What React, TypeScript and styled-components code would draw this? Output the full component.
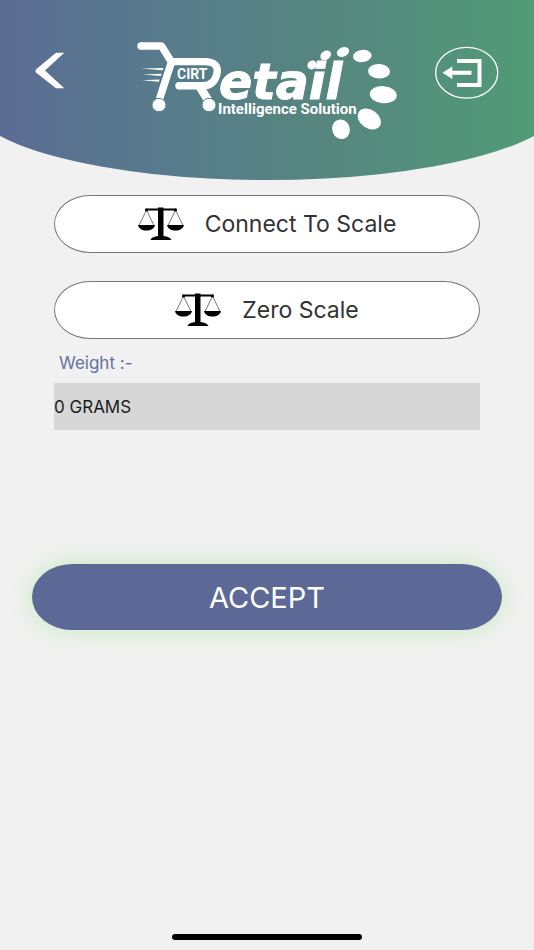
import React from "react";
import styled, { createGlobalStyle } from "styled-components";

const GlobalStyle = createGlobalStyle`
  *, *::before, *::after { box-sizing: border-box; }
  body { margin: 0; background: #f1f1f1; font-family: Inter, "Liberation Sans", sans-serif; }
  button, input { font-family: inherit; }
`;

const Page = styled.div`
  min-height: 100vh;
  display: flex;
  flex-direction: column;
  background: #f1f1f1;
`;

const Header = styled.header`
  position: relative;
  display: flex;
  align-items: flex-start;
  justify-content: space-between;
  padding: 35px 35px 35px;
  overflow: hidden;
  isolation: isolate;

  &::before {
    content: "";
    position: absolute;
    z-index: -1;
    inset: 0 -6%;
    border-radius: 0 0 50% 50% / 0 0 80px 80px;
    background: linear-gradient(90deg, #5c6c94 5%, #577c8b 35%, #56857f 58%, #52957a 85%, #529c74 96%);
  }
`;

const IconButton = styled.button`
  display: block;
  padding: 0;
  border: 0;
  background: none;
  cursor: pointer;

  svg { display: block; }
`;

const Logo = styled.svg`
  display: block;
  fill: #fff;
`;

const Wordmark = styled.text`
  font: italic 700 49px "DejaVu Sans", sans-serif;
  stroke: #fff;
  stroke-width: 1px;
`;

const LogoCaption = styled.text<{ $size: number }>`
  font: 700 ${(p) => p.$size}px Roboto, sans-serif;
`;

const Main = styled.main`
  flex: 1;
  display: flex;
  flex-direction: column;
  padding: 15px 32px 0;
`;

const Controls = styled.section`
  display: flex;
  flex-direction: column;
  padding: 0 22px;
`;

const ScaleButton = styled.button`
  display: flex;
  align-items: center;
  justify-content: center;
  gap: 21px;
  height: 58px;
  margin-bottom: 28px;
  padding: 0;
  border: 1px solid #777;
  border-radius: 36px / 50%;
  background: #fff;
  color: #333;
  font-size: 23px;
  line-height: 28px;
  cursor: pointer;

  & + & { margin-bottom: 14px; }
`;

const WeightLabel = styled.label`
  padding: 0 5px;
  color: #6272a0;
  font-size: 17px;
  line-height: 20px;
`;

const WeightField = styled.input`
  width: 100%;
  height: 47px;
  margin-top: 10px;
  padding: 0;
  border: 0;
  border-radius: 0;
  outline: 0;
  background: #d7d7d7;
  color: #1c1c1c;
  font-size: 17px;
`;

const AcceptButton = styled.button`
  height: 66px;
  margin-top: 134px;
  padding: 0;
  border: 0;
  border-radius: 40px / 50%;
  background: #5c6996;
  box-shadow: 0 0 24px #c4ebbd;
  color: #fff;
  font-size: 29px;
  cursor: pointer;
`;

const HomeIndicator = styled.div`
  align-self: center;
  width: 190px;
  height: 6px;
  margin: 10px 0;
  border-radius: 3px;
  background: #000;
`;

const dots = [
  { x: 312, y: 65, rx: 4.8, ry: 4.2, turn: -35 },
  { x: 325.7, y: 55.3, rx: 5.8, ry: 4.4, turn: -35 },
  { x: 343, y: 52, rx: 6.4, ry: 4.6, turn: -22 },
  { x: 362.3, y: 56, rx: 9.4, ry: 6.1, turn: -6 },
  { x: 379, y: 71.3, rx: 11, ry: 7.2, turn: 3 },
  { x: 383.3, y: 94.7, rx: 13.5, ry: 8.6, turn: 5 },
  { x: 369.3, y: 119, rx: 12.6, ry: 9.2, turn: 35 },
  { x: 341, y: 129.2, rx: 9.9, ry: 8.8, turn: 70 },
];

function RetailLogo() {
  return (
    <Logo width="270" height="110" viewBox="130 35 270 110" role="img" aria-label="CIRT Retail Intelligence Solution">
      <g fill="none" stroke="#fff" strokeWidth="7.4">
        <path d="M141 46H161.500L171.500 62L159.500 99" strokeLinejoin="round" />
        <path d="M170 61.600H205C214 61.600 218 66 217.200 72C216 81 211 85.800 203 85.800H179" />
        <path d="M198 84L208 100" strokeWidth="8.500" />
      </g>
      <circle cx="141" cy="46" r="3.700" />
      <circle cx="179" cy="85.800" r="3.700" />
      <path d="M141 68.500L163.500 67.900L162.500 70.200ZM143 74.500L161.500 73.700L160.800 76ZM142 80.200L159.500 79.400L158.800 81.700Z" />
      <g stroke="#57808a" strokeWidth="1">
        <ellipse cx="159" cy="105" rx="7" ry="6.700" />
        <ellipse cx="209" cy="105" rx="7" ry="6.700" />
      </g>
      <LogoCaption $size={14} x="177" y="79">CIRT</LogoCaption>
      <Wordmark x="219" y="99">etail</Wordmark>
      <LogoCaption $size={15} x="218" y="114">Intelligence Solution</LogoCaption>
      {dots.map((d) => (
        <ellipse key={d.x} cx={d.x} cy={d.y} rx={d.rx} ry={d.ry} transform={`rotate(${d.turn} ${d.x} ${d.y})`} />
      ))}
    </Logo>
  );
}

function BalanceIcon() {
  return (
    <svg width="46" height="34" viewBox="0 0 46 34" aria-hidden="true">
      <path d="M7.500 1.500H38.500V3.500H7.500ZM20 .5H25.500V29.500H20Z" />
      <path d="M12.500 33C13 30.500 17 29.500 20 29H25.500C29 29.500 32.500 30.500 33.500 33Z" />
      <path d="M0 18H17C16.500 21.500 13 23.600 8.500 23.600S.5 21.500 0 18ZM29 18H46C45.500 21.500 42 23.600 37.500 23.600S29.500 21.500 29 18Z" />
      <path d="M8.500 3L1 18.500M8.500 3L16 18.500M37.500 3L30 18.500M37.500 3L45 18.500" fill="none" stroke="#555" strokeWidth=".8" />
      <circle cx="8.500" cy="3" r="1.500" />
      <circle cx="37.500" cy="3" r="1.500" />
    </svg>
  );
}

export default function App() {
  return (
    <Page>
      <GlobalStyle />
      <Header>
        <IconButton type="button" aria-label="Back">
          <svg width="60" height="70" viewBox="0 0 60 70">
            <path d="M21 17.700H29.300L10 35.400L29.300 53.200H21L1.200 37.800Q-.2 36 1.200 34.200Z" fill="#fff" />
          </svg>
        </IconButton>
        <RetailLogo />
        <IconButton type="button" aria-label="Log out">
          <svg width="64" height="76" viewBox="0 0 64 76">
            <ellipse cx="31.700" cy="37.700" rx="31" ry="25.400" fill="none" stroke="#fff" strokeWidth="1.300" />
            <path d="M22 26H44.500V50H22M36.500 37.800H16" fill="none" stroke="#fff" strokeWidth="4" />
            <path d="M7.500 37.800L17.300 31.500V44Z" fill="#fff" />
          </svg>
        </IconButton>
      </Header>
      <Main>
        <Controls>
          <ScaleButton type="button"><BalanceIcon />Connect To Scale</ScaleButton>
          <ScaleButton type="button"><BalanceIcon />Zero Scale</ScaleButton>
          <WeightLabel htmlFor="weight">Weight :-</WeightLabel>
          <WeightField id="weight" value="0 GRAMS" readOnly />
        </Controls>
        <AcceptButton type="button">ACCEPT</AcceptButton>
      </Main>
      <HomeIndicator />
    </Page>
  );
}
